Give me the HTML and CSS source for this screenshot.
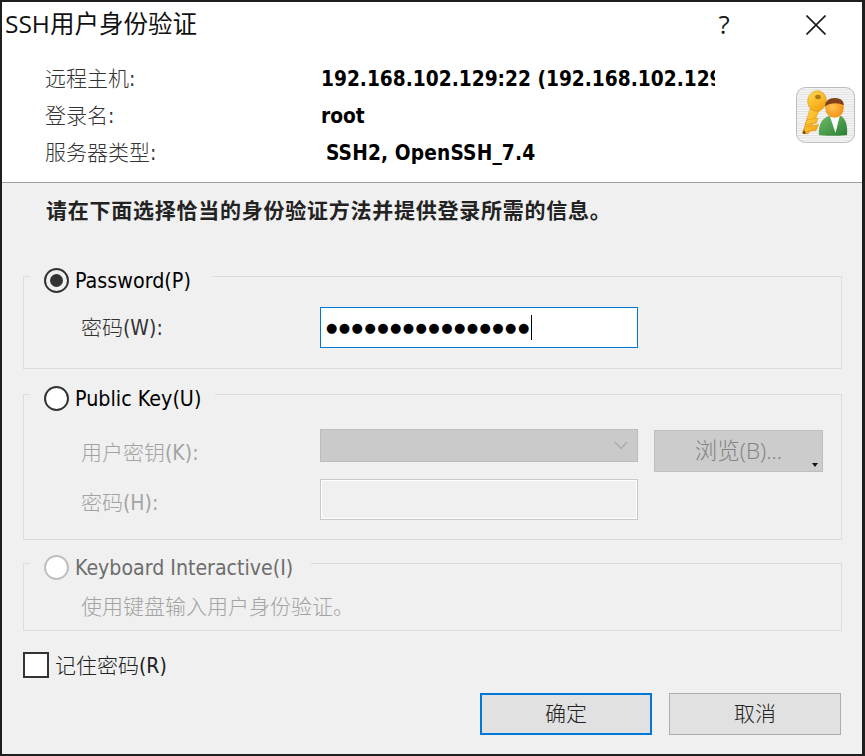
FILE: index.html
```html
<!DOCTYPE html>
<html lang="zh-CN">
<head>
    <meta charset="UTF-8">
    <title>SSH用户身份验证</title>
    <link rel="stylesheet" href="styles.css">
</head>
<body>
    <div class="dialog">
        <div class="dialog-top">
            <div class="title-bar">
                <span class="title-text">SSH用户身份验证</span>
                <span class="title-btn help-btn">?</span>
                <span class="title-btn">
                    <svg width="20" height="20" viewBox="0 0 20 20"><path d="M0.5 0.5 L19.5 19.5 M19.5 0.5 L0.5 19.5" stroke="#1a1a1a" stroke-width="1.6" fill="none"/></svg>
                </span>
            </div>
            <div class="host-area">
                <div class="host-info">
                    <div class="host-label">远程主机:</div>
                    <div class="host-value">192.168.102.129:22 (192.168.102.129:22)</div>
                    <div class="host-label">登录名:</div>
                    <div class="host-value">root</div>
                    <div class="host-label">服务器类型:</div>
                    <div class="host-value host-value-type">SSH2, OpenSSH_7.4</div>
                </div>
                <svg class="key-icon" width="59" height="56" viewBox="0 0 59 56">
                    <defs>
                        <linearGradient id="gold" x1="0" y1="0" x2="1" y2="1">
                            <stop offset="0" stop-color="#ffdc50"/>
                            <stop offset="1" stop-color="#f29a06"/>
                        </linearGradient>
                        <linearGradient id="green" x1="0" y1="0" x2="1" y2="1">
                            <stop offset="0" stop-color="#6fbb66"/>
                            <stop offset="1" stop-color="#2a7f34"/>
                        </linearGradient>
                        <radialGradient id="face" cx="0.4" cy="0.45" r="0.7">
                            <stop offset="0" stop-color="#ffc24c"/>
                            <stop offset="1" stop-color="#ef8a10"/>
                        </radialGradient>
                        <pattern id="stripes" width="4" height="2.4" patternUnits="userSpaceOnUse">
                            <rect width="4" height="2.4" fill="#f6f6f6"/>
                            <rect width="4" height="0.9" fill="#dedede"/>
                        </pattern>
                    </defs>
                    <rect x="0.5" y="0.5" width="58" height="55" rx="9" fill="url(#stripes)" stroke="#bcbcbc"/>
                    <path d="M14 22 L23 24 L12 47 L6.5 46 Z" fill="url(#gold)" stroke="#d98a08" stroke-width="0.5"/>
                    <path d="M11 33 L22 31 L20.5 36 L9.5 37.5 Z M9.5 40 L22.5 37.5 L20 43.5 L7.5 45 Z" fill="url(#gold)" stroke="#d98a08" stroke-width="0.5"/>
                    <path d="M6.5 46.5 L10 47 L8 43 Z" fill="#6b3a08"/>
                    <ellipse cx="21" cy="14" rx="9.3" ry="10.3" transform="rotate(15 21 14)" fill="url(#gold)" stroke="#d98a08" stroke-width="0.5"/>
                    <ellipse cx="22" cy="10" rx="2.8" ry="2.2" fill="#a87a18"/>
                    <path d="M23 48 C22 38 26 31 33 29 L45 29 C49 31 52 38 51 48 C46 49 28 49 23 48 Z" fill="url(#green)"/>
                    <path d="M33.5 28 L44 28 L39.5 46 Z" fill="#ffffff"/>
                    <ellipse cx="38.5" cy="21" rx="9.3" ry="9.8" fill="url(#face)"/>
                    <path d="M29.2 19.5 C28.7 14 33 11 38.8 11 C44.5 11 48.3 14 47.8 18.5 C43.5 15.5 33.5 15.5 29.2 19.5 Z" fill="#80401a"/>
                </svg>
            </div>
        </div>

        <div class="dialog-body">
            <div class="instruction">请在下面选择恰当的身份验证方法并提供登录所需的信息。</div>

            <div class="group group-password">
                <div class="group-head">
                    <span class="radio radio-on"></span>
                    <span>Password(P)</span>
                </div>
                <div class="form-row">
                    <div class="form-label label-w">密码(W):</div>
                    <div class="pass-box">
                        <span class="pass-dots">●●●●●●●●●●●●●●●●</span>
                        <span class="caret"></span>
                    </div>
                </div>
            </div>

            <div class="group group-key">
                <div class="group-head">
                    <span class="radio"></span>
                    <span>Public Key(U)</span>
                </div>
                <div class="key-grid">
                    <div class="form-label off label-key">用户密钥(K):</div>
                    <div class="combo-off">
                        <svg width="14" height="9" viewBox="0 0 14 9"><path d="M1 1 L7 7.5 L13 1" stroke="#a9a9a9" stroke-width="1.2" fill="none"/></svg>
                    </div>
                    <div class="browse-btn">浏览(B)...<span class="browse-arrow"></span></div>
                    <div class="form-label off label-h">密码(H):</div>
                    <div class="input-off"></div>
                </div>
            </div>

            <div class="group group-kbd">
                <div class="group-head head-off">
                    <span class="radio radio-off"></span>
                    <span>Keyboard Interactive(I)</span>
                </div>
                <div class="kbd-text">使用键盘输入用户身份验证。</div>
            </div>

            <div class="remember">
                <span class="checkbox"></span>
                <span class="remember-text">记住密码(R)</span>
            </div>

            <div class="buttons">
                <div class="btn btn-default">确定</div>
                <div class="btn">取消</div>
            </div>
        </div>
    </div>
</body>
</html>
```

FILE: styles.css
```css
body {
    margin: 0;
    padding: 0;
    background-color: #1e1e1e;
    font-family: "DejaVu Sans Condensed", "DejaVu Sans", "Noto Sans CJK SC", sans-serif;
    font-size: 21px;
    color: #111;
}
.dialog {
    box-sizing: border-box;
    width: 865px;
    height: 756px;
    border-style: solid;
    border-color: #1e1e1e;
    border-width: 2px 3px 2px 2px;
    display: flex;
    flex-direction: column;
    background-color: #f0f0f0;
}
.dialog-top {
    height: 180px;
    background-color: #fff;
    border-bottom: 1px solid #a0a0a0;
}
.title-bar {
    display: flex;
    align-items: center;
    height: 46px;
    padding-left: 3px;
}
.title-text {
    flex: 1;
    padding-bottom: 5px;
    font-family: "Open Sans", "Noto Sans CJK SC", sans-serif;
    font-size: 24.5px;
}
.title-btn {
    width: 92px;
    display: flex;
    align-items: center;
    justify-content: center;
}
.help-btn {
    padding: 0 0 3px 1px;
    font-family: "Open Sans", sans-serif;
    font-size: 26px;
    color: #1a1a1a;
}
.host-area {
    display: flex;
    justify-content: space-between;
    padding: 12px 7px 0 43px;
}
.host-info {
    display: grid;
    grid-template-columns: 276px 394px;
    grid-auto-rows: 37px;
    align-items: center;
    margin-right: 1px;
}
.host-label {
    padding-bottom: 4px;
    color: #333;
    font-weight: 300;
}
.host-value {
    font-size: 20.7px;
    font-weight: bold;
    color: #000;
    white-space: nowrap;
    overflow: hidden;
}
.host-value-type {
    padding-left: 5px;
    letter-spacing: 0.15px;
}
.key-icon {
    margin-top: 27px;
}
.dialog-body {
    flex: 1;
    padding: 0 20px 0 21px;
}
.instruction {
    padding: 13px 0 0 23px;
    height: 30px;
    line-height: 30px;
    font-weight: bold;
    letter-spacing: 0.75px;
    margin-bottom: 50px;
    color: #222;
}
.group {
    border: 1px solid #dcdcdc;
}
.group-password {
    height: 93px;
    box-sizing: border-box;
    margin-bottom: 25px;
}
.group-key {
    height: 146px;
    box-sizing: border-box;
    margin-bottom: 23px;
}
.group-kbd {
    height: 68px;
    box-sizing: border-box;
    margin-bottom: 21px;
}
.group-head {
    display: flex;
    align-items: center;
    gap: 6px;
    width: fit-content;
    height: 26px;
    margin: -10px 0 0 6px;
    padding: 0 21px 0 14px;
    background-color: #f0f0f0;
    color: #000;
    font-size: 21.3px;
}
.group-key .group-head {
    padding-right: 14px;
}
.group-kbd .group-head {
    padding-right: 18px;
    font-size: 21.15px;
}
.head-off {
    color: #6d6d6d;
}
.radio {
    box-sizing: border-box;
    width: 25px;
    height: 25px;
    border: 2px solid #333;
    border-radius: 50%;
    background-color: #fff;
    display: flex;
    align-items: center;
    justify-content: center;
}
.radio-on {
    background-color: #f0f0f0;
}
.radio-on::after {
    content: "";
    width: 13px;
    height: 13px;
    border-radius: 50%;
    background-color: #333;
}
.radio-off {
    border-color: #bfbfbf;
}
.form-row {
    display: flex;
    align-items: center;
    margin: 14px 0 0 57px;
}
.form-label {
    width: 239px;
    color: #333;
    font-weight: 300;
}
.form-label.off {
    color: #a3a3a3;
}
.label-w {
    padding-bottom: 4px;
}
.pass-box {
    box-sizing: border-box;
    width: 318px;
    height: 41px;
    display: flex;
    align-items: center;
    padding-left: 5px;
    background-color: #fff;
    border: 1px solid #0078d7;
}
.pass-dots {
    font-family: "DejaVu Sans", sans-serif;
    font-size: 13px;
    letter-spacing: 1.45px;
    color: #000;
}
.caret {
    width: 1px;
    height: 25px;
    background-color: #000;
}
.key-grid {
    display: grid;
    grid-template-columns: 239px 318px 185px;
    grid-template-rows: 43px 41px;
    row-gap: 7px;
    margin: 18px 0 0 57px;
}
.label-key {
    align-self: center;
}
.label-h {
    align-self: center;
    padding-top: 3px;
}
.combo-off {
    box-sizing: border-box;
    height: 33px;
    display: flex;
    align-items: center;
    justify-content: flex-end;
    padding-right: 9px;
    background-color: #cacaca;
    border: 1px solid #bcbcbc;
}
.browse-btn {
    position: relative;
    box-sizing: border-box;
    width: 169px;
    height: 42px;
    margin: 1px 0 0 16px;
    background-color: #ccc;
    border: 1px solid #bfbfbf;
    color: #838383;
    font-family: "Open Sans", "Noto Sans CJK SC", sans-serif;
    font-size: 22.5px;
    font-weight: 300;
    line-height: 40px;
    text-align: center;
}
.browse-arrow {
    position: absolute;
    right: 4px;
    bottom: 4px;
    border-style: solid;
    border-width: 4px 3px 0 3px;
    border-color: #111 transparent transparent transparent;
}
.input-off {
    box-sizing: border-box;
    height: 41px;
    background-color: #f0f0f0;
    border: 1px solid #c8c8c8;
    box-shadow: inset 0 0 0 1px #fff;
}
.kbd-text {
    margin: 12px 0 0 57px;
    line-height: 30px;
    color: #a3a3a3;
    font-weight: 300;
}
.remember {
    display: flex;
    align-items: center;
    gap: 6px;
    height: 26px;
    color: #222;
    font-weight: 300;
}
.remember-text {
    padding-bottom: 3px;
}
.checkbox {
    box-sizing: border-box;
    width: 26px;
    height: 26px;
    border: 2px solid #333;
    background-color: #fff;
}
.buttons {
    display: flex;
    justify-content: flex-end;
    gap: 17px;
    margin: 15px 1px 0 0;
}
.btn {
    box-sizing: border-box;
    width: 172px;
    height: 42px;
    line-height: 40px;
    text-align: center;
    background-color: #e1e1e1;
    border: 1px solid #adadad;
    color: #222;
    font-weight: 300;
}
.btn-default {
    border: 2px solid #0078d7;
    line-height: 38px;
}
```
